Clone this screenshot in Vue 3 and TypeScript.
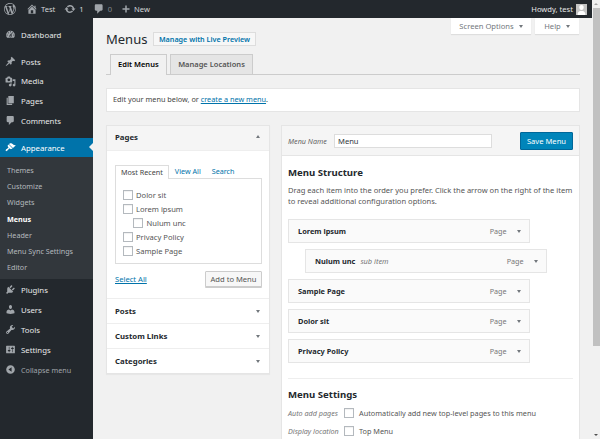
<script setup lang="ts">
const icons: Record<string, string> = {
  wp: 'M20 10c0-5.51-4.49-10-10-10C4.48 0 0 4.49 0 10c0 5.52 4.48 10 10 10 5.51 0 10-4.48 10-10zM7.78 15.37L4.37 6.22c.55-.02 1.17-.08 1.17-.08.5-.06.44-1.13-.06-1.11 0 0-1.45.11-2.37.11-.18 0-.37 0-.58-.01C4.12 2.69 6.87 1.11 10 1.11c2.33 0 4.45.87 6.05 2.34-.68-.11-1.65.39-1.65 1.58 0 .74.45 1.36.9 2.1.35.61.55 1.36.55 2.46 0 1.49-1.4 5-1.4 5l-3.03-8.37c.54-.02.82-.17.82-.17.5-.05.44-1.25-.06-1.22 0 0-1.44.12-2.38.12-.87 0-2.33-.12-2.33-.12-.5-.03-.56 1.2-.06 1.22l.92.08 1.26 3.41zM17.41 10c.24-.64.74-1.87.43-4.25.7 1.29 1.05 2.71 1.05 4.25 0 3.29-1.73 6.24-4.4 7.78.97-2.59 1.94-5.2 2.92-7.78zM6.1 18.09C3.12 16.65 1.11 13.53 1.11 10c0-1.3.23-2.48.72-3.59C3.25 10.3 4.67 14.2 6.1 18.09zm4.03-6.63l2.58 6.98c-.86.29-1.76.45-2.71.45-.79 0-1.57-.11-2.29-.33.81-2.38 1.62-4.74 2.42-7.1z',
  home: 'M16 8.5l1.53 1.53-1.06 1.06L10 4.62l-6.47 6.47-1.06-1.06L10 2.5l4 4v-2h2v4zm-6-2.46l6 5.99V18H4v-5.97zM12 17v-5H8v5h4z',
  update: 'M10.2 3.28c3.53 0 6.43 2.61 6.92 6h2.08l-3.5 4-3.5-4h2.32c-.45-1.97-2.21-3.45-4.32-3.45-1.45 0-2.73.71-3.54 1.78L4.95 5.66C6.23 4.2 8.11 3.28 10.2 3.28zm-.4 13.44c-3.52 0-6.43-2.61-6.92-6H.8l3.5-4c1.17 1.33 2.33 2.67 3.5 4H5.48c.45 1.97 2.21 3.45 4.32 3.45 1.45 0 2.73-.71 3.54-1.78l1.71 1.95c-1.28 1.46-3.15 2.38-5.25 2.38z',
  comment: 'M5 2h9c1.1 0 2 .9 2 2v7c0 1.1-.9 2-2 2h-2l-5 5v-5H5c-1.1 0-2-.9-2-2V4c0-1.1.9-2 2-2z',
  plus: 'M17 8.5v3h-5.500V17h-3v-5.500H3v-3h5.500V3h3v5.500H17z',
  dashboard: 'M3.76 16h12.48c1.1-1.37 1.76-3.11 1.76-5 0-4.42-3.58-8-8-8s-8 3.58-8 8c0 1.89.66 3.63 1.76 5zM10 4c.55 0 1 .45 1 1s-.45 1-1 1-1-.45-1-1 .45-1 1-1zM6 6c.55 0 1 .45 1 1s-.45 1-1 1-1-.45-1-1 .45-1 1-1zm8 0c.55 0 1 .45 1 1s-.45 1-1 1-1-.45-1-1 .45-1 1-1zm-5.37 5.55L12 7v6c0 1.1-.9 2-2 2s-2-.9-2-2c0-.57.24-1.08.63-1.45zM4 10c.55 0 1 .45 1 1s-.45 1-1 1-1-.45-1-1 .45-1 1-1zm12 0c.55 0 1 .45 1 1s-.45 1-1 1-1-.45-1-1 .45-1 1-1zm-5 3c0-.55-.45-1-1-1s-1 .45-1 1 .45 1 1 1 1-.45 1-1z',
  post: 'M10.44 3.02l1.82-1.82 6.36 6.35-1.83 1.82c-1.05-.68-2.48-.57-3.41.36l-.75.75c-.92.93-1.04 2.35-.35 3.41l-1.83 1.82-2.41-2.41-2.8 2.79c-.42.42-3.38 2.71-3.8 2.29s1.86-3.39 2.28-3.81l2.79-2.79L4.1 9.36l1.83-1.82c1.05.69 2.48.57 3.4-.36l.75-.75c.93-.92 1.05-2.35.36-3.41z',
  media: 'M13 11V4c0-.55-.45-1-1-1h-1.67L9 1H5L3.67 3H2c-.55 0-1 .45-1 1v7c0 .55.45 1 1 1h10c.55 0 1-.45 1-1zM7 4.500c1.38 0 2.5 1.12 2.5 2.5S8.38 9.5 7 9.5 4.5 8.38 4.5 7 5.62 4.5 7 4.5zM14 6h5v10.5c0 1.38-1.12 2.5-2.5 2.5S14 17.88 14 16.5s1.12-2.5 2.5-2.5c.17 0 .34.02.5.05V9h-3V6zm-4 8.05V13h2v3.5c0 1.38-1.12 2.5-2.5 2.5S7 17.88 7 16.5 8.12 14 9.5 14c.17 0 .34.02.5.05z',
  page: 'M6 15V2h10v13H6zm-1 1h8v2H3V5h2v11z',
  appearance: 'M14.48 11.06L7.41 3.99l1.5-1.5c.5-.56 2.3-.47 3.51.32 1.21.8 1.43 1.28 2.91 2.1 1.18.64 2.45 1.26 4.45.85zm-.71.71L6.7 4.7 4.93 6.47c-.39.39-.39 1.02 0 1.41l1.06 1.06c.39.39.39 1.03 0 1.42-.6.6-1.43 1.11-2.21 1.69-.35.26-.7.53-1.01.84-1.34 1.33-1.86 2.91-1.27 3.5.59.59 2.17.07 3.5-1.28.31-.31.58-.66.84-1.01.58-.78 1.09-1.61 1.69-2.21.39-.39 1.03-.39 1.42 0l1.06 1.06c.39.39 1.02.39 1.41 0z',
  plugin: 'M13.11 4.36L9.87 7.6 8 5.73l3.24-3.24c.35-.34 1.05-.2 1.56.32.52.51.66 1.21.31 1.55zm-8 1.77l.91-1.12 9.01 9.01-1.19.84c-.71.71-2.63 1.16-3.82 1.16H6.14L4.9 17.26c-.59.59-1.54.59-2.12 0-.59-.58-.59-1.53 0-2.12l1.24-1.24v-3.88c0-1.13.4-3.19 1.09-3.89zm7.26 3.97l3.24-3.24c.34-.35 1.04-.21 1.55.31.52.51.66 1.21.31 1.55l-3.24 3.25z',
  users: 'M10 9.25c-2.27 0-2.73-3.44-2.73-3.44C7 4.02 7.82 2 9.97 2c2.16 0 2.98 2.02 2.71 3.81 0 0-.41 3.44-2.68 3.44zm0 2.57L12.72 10c2.39 0 4.52 2.33 4.52 4.53v2.49s-3.65 1.13-7.24 1.13c-3.65 0-7.24-1.13-7.24-1.13v-2.49c0-2.25 1.94-4.48 4.47-4.48z',
  tools: 'M16.68 9.77c-1.34 1.34-3.3 1.67-4.95.99l-5.41 6.52c-.99.99-2.59.99-3.58 0s-.99-2.59 0-3.57l6.52-5.42c-.68-1.65-.35-3.61.99-4.95 1.28-1.28 3.12-1.62 4.72-1.06l-2.89 2.89 2.82 2.82 2.86-2.87c.53 1.58.18 3.39-1.08 4.65zM3.81 16.21c.4.39 1.04.39 1.43 0 .4-.4.4-1.04 0-1.43-.39-.4-1.03-.4-1.43 0-.39.39-.39 1.03 0 1.43z',
  settings: 'M18 16V4c0-.55-.45-1-1-1H3c-.55 0-1 .45-1 1v12c0 .55.45 1 1 1h14c.55 0 1-.45 1-1zM8 11h1c.55 0 1 .45 1 1s-.45 1-1 1H8v1.5c0 .28-.22.5-.5.5s-.5-.22-.5-.5V13H6c-.55 0-1-.45-1-1s.45-1 1-1h1V5.5c0-.28.22-.5.5-.5s.5.22.5.5V11zm5-2h-1c-.55 0-1-.45-1-1s.45-1 1-1h1V5.5c0-.28.22-.5.5-.5s.5.22.5.5V7h1c.55 0 1 .45 1 1s-.45 1-1 1h-1v5.5c0 .28-.22.5-.5.5s-.5-.22-.5-.5V9z',
  collapse: 'M10 2.16c4.33 0 7.84 3.51 7.84 7.84s-3.51 7.84-7.84 7.84S2.16 14.33 2.16 10 5.71 2.16 10 2.16zm2 11.72V6.12L6.18 9.97z',
}

const groupA = [
  { label: 'Posts', icon: 'post' },
  { label: 'Media', icon: 'media' },
  { label: 'Pages', icon: 'page' },
  { label: 'Comments', icon: 'comment' },
]
const submenu = ['Themes', 'Customize', 'Widgets', 'Menus', 'Header', 'Menu Sync Settings', 'Editor']
const groupB = [
  { label: 'Plugins', icon: 'plugin' },
  { label: 'Users', icon: 'users' },
  { label: 'Tools', icon: 'tools' },
  { label: 'Settings', icon: 'settings' },
]
const pages = [
  { label: 'Dolor sit', child: false },
  { label: 'Lorem ipsum', child: false },
  { label: 'Nulum unc', child: true },
  { label: 'Privacy Policy', child: false },
  { label: 'Sample Page', child: false },
]
const closedBoxes = ['Posts', 'Custom Links', 'Categories']
const menuItems = [
  { label: 'Lorem ipsum', sub: false },
  { label: 'Nulum unc', sub: true },
  { label: 'Sample Page', sub: false },
  { label: 'Dolor sit', sub: false },
  { label: 'Privacy Policy', sub: false },
]
</script>

<template>
  <div class="window">
    <div class="viewport">
      <header class="adminbar">
        <div class="bar-left">
          <svg class="bar-icon wp" viewBox="0 0 20 20"><path :d="icons.wp" /></svg>
          <span class="bar-item"><svg class="bar-icon" viewBox="0 0 20 20"><path :d="icons.home" /></svg>Test</span>
          <span class="bar-item"><svg class="bar-icon" viewBox="0 0 20 20"><path :d="icons.update" /></svg>1</span>
          <span class="bar-item dim"><svg class="bar-icon" viewBox="0 0 20 20"><path :d="icons.comment" /></svg>0</span>
          <span class="bar-item"><svg class="bar-icon small" viewBox="0 0 20 20"><path :d="icons.plus" /></svg>New</span>
        </div>
        <div class="howdy">
          Howdy, test
          <span class="avatar">
            <svg viewBox="0 0 20 20"><rect width="20" height="20" fill="#c4c4c4" /><path fill="#fff" d="M10 11c-2.6 0-4-2.4-4-5s1.600-4 4-4 4 1.400 4 4-1.400 5-4 5zm-7 9v-2c0-3 2.500-5 5-5.500h4c2.500.5 5 2.500 5 5.500v2z" /></svg>
          </span>
        </div>
      </header>

      <div class="body">
        <nav class="sidebar">
          <a class="nav-row first"><svg viewBox="0 0 20 20"><path :d="icons.dashboard" /></svg>Dashboard</a>
          <div class="nav-group">
            <a v-for="g in groupA" :key="g.label" class="nav-row"><svg viewBox="0 0 20 20"><path :d="icons[g.icon]" /></svg>{{ g.label }}</a>
          </div>
          <a class="nav-row current"><svg viewBox="0 0 20 20"><path :d="icons.appearance" /></svg>Appearance<i class="notch"></i></a>
          <ul class="submenu">
            <li v-for="s in submenu" :key="s" :class="{ active: s === 'Menus' }">{{ s }}</li>
          </ul>
          <div class="nav-group after-sub">
            <a v-for="g in groupB" :key="g.label" class="nav-row"><svg viewBox="0 0 20 20"><path :d="icons[g.icon]" /></svg>{{ g.label }}</a>
            <a class="nav-row collapse"><svg viewBox="0 0 20 20"><path :d="icons.collapse" /></svg>Collapse menu</a>
          </div>
        </nav>

        <main class="content">
          <div class="screen-meta">
            <button class="meta-tab wide">Screen Options <i class="tri"></i></button>
            <button class="meta-tab">Help <i class="tri"></i></button>
          </div>

          <div class="title-row">
            <h1>Menus</h1>
            <a class="live">Manage with Live Preview</a>
          </div>

          <div class="tabs">
            <span class="tab on">Edit Menus</span>
            <span class="tab">Manage Locations</span>
          </div>

          <div class="notice">Edit your menu below, or <a>create a new menu</a>.</div>

          <div class="columns">
            <aside class="left">
              <section class="box-head open">
                <h3>Pages</h3><i class="tri up"></i>
              </section>
              <section class="pages-body">
                <div class="sub-tabs">
                  <span class="sub-tab on">Most Recent</span>
                  <span class="sub-tab">View All</span>
                  <span class="sub-tab">Search</span>
                </div>
                <div class="checklist">
                  <label v-for="p in pages" :key="p.label" class="check-row" :class="{ child: p.child }"><i class="cb"></i>{{ p.label }}</label>
                </div>
                <div class="add-row">
                  <a>Select All</a>
                  <button class="add">Add to Menu</button>
                </div>
              </section>
              <section v-for="b in closedBoxes" :key="b" class="box-head closed">
                <h3>{{ b }}</h3><i class="tri"></i>
              </section>
            </aside>

            <section class="editor">
              <div class="editor-head">
                <em>Menu Name</em>
                <span class="name-input">Menu</span>
                <button class="save">Save Menu</button>
              </div>
              <div class="editor-body">
                <h3>Menu Structure</h3>
                <p>Drag each item into the order you prefer. Click the arrow on the right of the item to reveal additional configuration options.</p>
                <div class="items">
                  <div v-for="m in menuItems" :key="m.label" class="item" :class="{ sub: m.sub }">
                    <span class="item-name">{{ m.label }}<em v-if="m.sub">sub item</em></span>
                    <span class="item-type">Page</span><i class="tri"></i>
                  </div>
                </div>
                <hr />
                <h3 class="settings-title">Menu Settings</h3>
                <div class="setting"><em>Auto add pages</em><i class="cb"></i>Automatically add new top-level pages to this menu</div>
                <div class="setting"><em>Display location</em><i class="cb"></i>Top Menu</div>
              </div>
            </section>
          </div>
        </main>
      </div>
    </div>

    <div class="scrollbar">
      <i class="arrow up"></i>
      <div class="thumb"></div>
      <i class="arrow"></i>
    </div>
  </div>
</template>

<style>
html, body { margin: 0; background: #f1f1f1; }
</style>

<style scoped>
* { box-sizing: border-box; }
.window {
  width: 600px; height: 439px; display: flex; overflow: hidden; background: #f1f1f1;
  font-family: "Noto Sans", "Open Sans", sans-serif; font-size: 7.6px; color: #444;
}
.viewport { width: 592px; height: 439px; display: flex; flex-direction: column; overflow: hidden; }
.adminbar {
  height: 18px; flex: none; background: #23282d; color: #d4d6d8; display: flex; justify-content: space-between; align-items: center;
}
.bar-left { display: flex; align-items: center; padding-left: 4px; }
.bar-icon { width: 12px; height: 12px; fill: #a0a5aa; flex: none; }
.bar-icon.small { width: 10px; height: 10px; }
.bar-icon.wp { margin-right: 10px; }
.bar-item { display: flex; align-items: center; gap: 3px; margin-right: 9px; }
.bar-item.dim { color: #82878c; margin-right: 9px; }
.howdy { display: flex; align-items: center; gap: 3px; padding-right: 5px; color: #e6e7e8; }
.avatar { width: 11px; height: 11px; display: block; }
.avatar svg { display: block; width: 11px; height: 11px; }

.body { flex: 1; display: flex; min-height: 0; }
.sidebar { width: 93px; flex: none; background: #23282d; color: #eee; }
.nav-row {
  height: 19.7px; display: flex; align-items: center; gap: 5px; padding-left: 5px; color: #e8e9ea; position: relative; font-size: 7.8px;
}
.nav-row svg { width: 11px; height: 11px; fill: #a0a5aa; flex: none; }
.nav-row.first { margin-top: 7px; }
.nav-group { margin-top: 7px; }
.nav-row.current { background: #0073aa; color: #fff; margin-top: 8px; height: 19px; }
.nav-row.current svg { fill: #fff; }
.notch {
  position: absolute; right: 0; top: 5px; width: 0; height: 0;
  border: 4px solid transparent; border-right-color: #f1f1f1; border-left-width: 0;
}
.submenu { list-style: none; margin: 0; padding: 4.5px 0 3px; background: #32373c; }
.submenu li { height: 16.25px; line-height: 16.25px; padding-left: 7px; color: #b4b9be; font-size: 7.2px; }
.submenu li.active { color: #fff; font-weight: 700; }
.nav-group.after-sub { margin-top: 1px; }
.nav-group.after-sub .nav-row { height: 20px; }
.nav-row.collapse { color: #a0a5aa; font-size: 7.2px; }

.content { flex: 1; min-width: 0; padding: 0 12px 0 13px; }
.screen-meta { display: flex; justify-content: flex-end; gap: 4px; height: 14px; padding-right: 1px; }
.meta-tab {
  width: 44px; height: 16px; padding: 0; border: 0; background: #fff; color: #72777c; font: inherit; display: flex; align-items: center; justify-content: center; gap: 5px;
  box-shadow: 0 1px 1px rgba(0,0,0,.08);
}
.meta-tab.wide { width: 80px; }
.tri {
  display: inline-block; width: 0; height: 0; flex: none;
  border-left: 2.5px solid transparent; border-right: 2.5px solid transparent; border-top: 3px solid #72777c;
}
.tri.up { border-top: 0; border-bottom: 3px solid #72777c; }

.title-row { display: flex; align-items: center; height: 14px; gap: 5.5px; }
h1 { margin: 0; font-size: 13px; font-weight: 400; color: #23282d; line-height: 14px; }
.live {
  height: 14px; padding: 0 5px; line-height: 13px; background: #f7f7f7; border: 1px solid #ddd; color: #0073aa; font-weight: 600; font-size: 7.2px;
}
.tabs { display: flex; margin-top: 8px; padding-left: 4px; gap: 3.5px; height: 21px; border-bottom: 1px solid #ccc; }
.tab {
  height: 20px; padding: 0 7px; background: #e5e5e5; border: 1px solid #ccc; border-bottom: 0; line-height: 18px; font-weight: 600; color: #555; font-size: 7.5px;
}
.tab.on { background: #f1f1f1; color: #000; height: 21px; }
.notice {
  margin-top: 13px; height: 24px; line-height: 21px; padding-left: 6px; background: #fff; color: #444; border: 1px solid #e5e5e5; font-size: 7.3px;
}
.notice a, .add-row a { color: #0073aa; text-decoration: underline; }
.columns { display: flex; align-items: flex-start; gap: 11px; margin-top: 13px; }
.left { width: 164px; flex: none; background: #fff; border: 1px solid #e5e5e5; box-shadow: 0 1px 1px rgba(0,0,0,.04); }
.box-head {
  display: flex; justify-content: space-between; align-items: center; padding: 0 9px 0 8px;
}
.box-head h3 { margin: 0; font-size: 7.8px; font-weight: 700; color: #23282d; }
.box-head.open { height: 25px; padding-bottom: 3px; background: #f5f5f5; border-bottom: 1px solid #eee; }
.box-head.closed { height: 25px; border-top: 1px solid #eee; }
.pages-body { padding: 14px 7px 8px 8px; height: 147px; }
.sub-tabs { display: flex; height: 14px; position: relative; z-index: 1; font-size: 7.2px; }
.sub-tab { padding: 0 5px; line-height: 13px; color: #0073aa; }
.sub-tab + .sub-tab + .sub-tab { margin-left: 1px; }
.sub-tab.on { color: #444; background: #fff; border: 1px solid #ddd; border-bottom: 0; margin-right: 1px; height: 14px; }
.checklist { border: 1px solid #ddd; height: 86px; margin-top: -1px; padding: 9px 0 0 6.5px; }
.check-row { display: flex; align-items: center; height: 14px; gap: 3.5px; color: #555; }
.check-row.child { padding-left: 10.5px; }
.cb {
  display: inline-block; width: 10px; height: 10px; background: #fff; border: 1px solid #b4b9be; flex: none; box-shadow: inset 0 1px 1px rgba(0,0,0,.06);
}
.add-row { display: flex; justify-content: space-between; align-items: center; margin-top: 7px; }
.add {
  height: 16px; width: 57px; padding: 0; font: inherit; color: #555; background: #f7f7f7; border: 1px solid #ccc; box-shadow: 0 1px 0 #ccc; border-radius: 1px;
}
.editor { flex: 1; min-width: 0; background: #fff; border: 1px solid #e5e5e5; height: 330px; }
.editor-head {
  height: 30px; background: #f5f5f5; border-bottom: 1px solid #e5e5e5; display: flex; align-items: center; padding: 0 6px;
}
.editor-head em { color: #666; font-size: 7.2px; width: 46px; flex: none; }
.name-input {
  width: 158px; height: 14px; background: #fff; border: 1px solid #ddd; padding-left: 3px; line-height: 12px; color: #32373c;
}
.save {
  margin-left: auto; width: 53px; height: 18px; padding: 0; background: #0085ba; border: 1px solid #006799; color: #fff; font: inherit; border-radius: 1px;
}
.editor-body { padding: 0 6px; }
.editor-body h3 { margin: 10px 0 0; font-size: 9.6px; line-height: 13px; font-weight: 700; color: #23282d; }
.editor-body p { margin: 6px 0 0; line-height: 11.4px; color: #555; font-size: 7.57px; }
.items { margin-top: 11px; display: flex; flex-direction: column; gap: 5.5px; }
.item {
  width: 241.5px; height: 24.5px; background: #fafafa; border: 1px solid #e5e5e5; display: flex; align-items: center; padding: 0 8px 0 9px;
}
.item.sub { margin-left: 17px; }
.item-name { flex: 1; font-weight: 700; color: #23282d; font-size: 7.4px; }
.item-name em { font-weight: 400; color: #777; margin-left: 5px; }
.item-type { color: #777; margin-right: 10px; font-size: 7.2px; }
hr { border: 0; border-top: 1px solid #eee; margin: 15px 0 0; }
.editor-body .settings-title { margin-top: 9px; }
.setting { display: flex; align-items: center; height: 18.5px; color: #555; font-size: 7.3px; }
.settings-title + .setting { margin-top: 2px; }
.setting em { width: 56px; flex: none; color: #777; font-size: 7.2px; }
.setting .cb { margin-right: 5px; }

.scrollbar { width: 8px; flex: none; background: #f1f1f1; display: flex; flex-direction: column; align-items: center; position: relative; }
.thumb { width: 7px; height: 338px; margin-top: 8px; background: #c1c1c1; }
.arrow {
  position: absolute; bottom: 3px; left: 2px; width: 0; height: 0;
  border-left: 2px solid transparent; border-right: 2px solid transparent; border-top: 2px solid #505050;
}
.arrow.up { top: 3px; bottom: auto; border-top: 0; border-bottom: 2px solid #a3a3a3; }
</style>
